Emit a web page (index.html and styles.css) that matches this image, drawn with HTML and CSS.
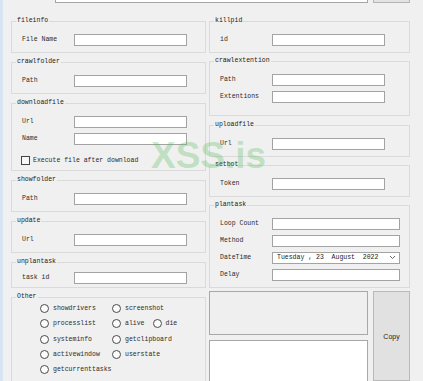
FILE: index.html
```html
<!DOCTYPE html>
<html lang="en">
<head>
    <meta charset="UTF-8">
    <meta name="viewport" content="width=device-width, initial-scale=1.0">
    <title>Panel</title>
    <link rel="stylesheet" href="styles.css">
</head>
<body>
    <div class="window">
        <div class="topbar">
            <input type="text" class="top-input">
            <button class="top-btn"></button>
        </div>

        <div class="columns">
            <div class="col col-left">
                <fieldset class="group">
                    <legend>fileinfo</legend>
                    <div class="row"><label>File Name</label><input type="text" class="field"></div>
                </fieldset>

                <fieldset class="group">
                    <legend>crawlfolder</legend>
                    <div class="row"><label>Path</label><input type="text" class="field"></div>
                </fieldset>

                <fieldset class="group">
                    <legend>downloadfile</legend>
                    <div class="row"><label>Url</label><input type="text" class="field"></div>
                    <div class="row"><label>Name</label><input type="text" class="field"></div>
                    <div class="check-row"><span class="checkbox"></span>Execute file after download</div>
                </fieldset>

                <fieldset class="group">
                    <legend>showfolder</legend>
                    <div class="row"><label>Path</label><input type="text" class="field"></div>
                </fieldset>

                <fieldset class="group">
                    <legend>update</legend>
                    <div class="row"><label>Url</label><input type="text" class="field"></div>
                </fieldset>

                <fieldset class="group group-tight">
                    <legend>unplantask</legend>
                    <div class="row"><label>task id</label><input type="text" class="field"></div>
                </fieldset>

                <fieldset class="group group-other">
                    <legend>Other</legend>
                    <div class="radios">
                        <div class="radio-item"><span class="radio"></span>showdrivers</div>
                        <div class="radio-item"><span class="radio"></span>screenshot</div>
                        <div class="radio-item"><span class="radio"></span>processlist</div>
                        <div class="radio-item">
                            <span class="radio"></span>alive
                            <span class="radio radio-gap"></span>die
                        </div>
                        <div class="radio-item"><span class="radio"></span>systeminfo</div>
                        <div class="radio-item"><span class="radio"></span>getclipboard</div>
                        <div class="radio-item"><span class="radio"></span>activewindow</div>
                        <div class="radio-item"><span class="radio"></span>userstate</div>
                        <div class="radio-item"><span class="radio"></span>getcurrenttasks</div>
                    </div>
                </fieldset>
            </div>

            <div class="col">
                <fieldset class="group">
                    <legend>killpid</legend>
                    <div class="row"><label>id</label><input type="text" class="field"></div>
                </fieldset>

                <fieldset class="group group-loose">
                    <legend>crawlextention</legend>
                    <div class="row"><label>Path</label><input type="text" class="field"></div>
                    <div class="row"><label>Extentions</label><input type="text" class="field"></div>
                </fieldset>

                <fieldset class="group">
                    <legend>uploadfile</legend>
                    <div class="row"><label>Url</label><input type="text" class="field"></div>
                </fieldset>

                <fieldset class="group">
                    <legend>setbot</legend>
                    <div class="row"><label>Token</label><input type="text" class="field"></div>
                </fieldset>

                <fieldset class="group">
                    <legend>plantask</legend>
                    <div class="row"><label>Loop Count</label><input type="text" class="field field-wide"></div>
                    <div class="row"><label>Method</label><input type="text" class="field field-wide"></div>
                    <div class="row">
                        <label>DateTime</label>
                        <div class="field field-wide date-box">
                            <span>Tuesday , 23&nbsp; August&nbsp; 2022</span>
                            <svg width="7" height="5" viewBox="0 0 7 5"><polyline points="1,1 3.5,3.5 6,1" fill="none" stroke="#555" stroke-width="0.9"/></svg>
                        </div>
                    </div>
                    <div class="row"><label>Delay</label><input type="text" class="field field-wide"></div>
                </fieldset>

                <div class="output">
                    <textarea class="out-box out-readonly" readonly></textarea>
                    <button class="copy-btn">Copy</button>
                    <textarea class="out-box"></textarea>
                </div>
            </div>
        </div>

        <div class="watermark">XSS.is</div>
    </div>
</body>
</html>
```

FILE: styles.css
```css
body {
    margin: 0;
    background-color: #f0f0f0;
    font-family: 'Liberation Mono', 'DejaVu Sans Mono', monospace;
    font-size: 6.5px;
    color: #2b2b2b;
    overflow: hidden;
}

.window {
    position: relative;
    min-height: 100vh;
    border-left: 3px solid #d7e4f4;
    padding-left: 8px;
}

.topbar {
    display: flex;
    height: 20px;
    margin-top: -17px;
    margin-bottom: 14px;
    padding-left: 44px;
}

.top-input {
    box-sizing: border-box;
    width: 313px;
    height: 20px;
    margin: 0;
    border: 1px solid #a5a5a5;
    background: #fff;
}

.top-btn {
    box-sizing: border-box;
    width: 37px;
    height: 20px;
    margin: 0 0 0 5px;
    padding: 0;
    border: 1px solid #b5b5b5;
    background: #e3e3e3;
}

.columns {
    display: grid;
    grid-template-columns: 195px 201px;
    column-gap: 3px;
}

.col {
    display: flex;
    flex-direction: column;
    gap: 4px;
}

.col-left {
    gap: 5px;
}

.group {
    margin: 0;
    min-width: 0;
    border: 1px solid #dadada;
    padding: 6px 4px 4px 10px;
}

.group legend {
    margin-left: -6px;
    padding: 0 1px;
    line-height: 8px;
    color: #222;
}

.group-loose {
    padding-bottom: 10px;
    margin-bottom: 1px;
}

.group-tight {
    padding-top: 3px;
    padding-bottom: 1px;
}

.row {
    display: flex;
    align-items: center;
    height: 17px;
}

.row label {
    width: 52px;
    flex-shrink: 0;
}

.field {
    box-sizing: border-box;
    width: 113px;
    height: 12px;
    margin: 0;
    padding: 0;
    border: 1px solid #a3a3a3;
    background: #fff;
}

.field-wide {
    width: 128px;
}

.date-box {
    display: flex;
    align-items: center;
    justify-content: space-between;
    padding: 0 3px 0 4px;
    white-space: pre;
    color: #222;
}

.check-row {
    display: flex;
    align-items: center;
    gap: 3px;
    height: 12px;
    margin-top: 7px;
    margin-left: -1px;
}

.checkbox {
    box-sizing: border-box;
    width: 9px;
    height: 9px;
    border: 1px solid #444;
    background: #f7f7f7;
}

.group-other {
    padding: 0 4px 20px 28px;
}

.group-other legend {
    margin-left: -24px;
}

.radios {
    display: grid;
    grid-template-columns: 72px auto;
    grid-auto-rows: 15.3px;
}

.radio-item {
    display: flex;
    align-items: center;
}

.radio {
    box-sizing: border-box;
    width: 9px;
    height: 9px;
    margin-right: 4px;
    border: 1px solid #4a4a4a;
    border-radius: 50%;
    background: #fbfbfb;
}

.radio-gap {
    margin-left: 8px;
}

.output {
    display: grid;
    grid-template-columns: 159px 37px;
    grid-template-rows: 44px 50px;
    column-gap: 5px;
    row-gap: 5px;
    margin-top: -1px;
}

.out-box {
    box-sizing: border-box;
    width: 100%;
    height: 100%;
    margin: 0;
    border: 1px solid #a8a8a8;
    background: #fff;
    resize: none;
}

.out-readonly {
    background: #efefef;
}

.copy-btn {
    grid-column: 2;
    grid-row: 1 / 3;
    box-sizing: border-box;
    height: 90px;
    margin: 0;
    padding: 0;
    border: 1px solid #b9b9b9;
    background: #e1e1e1;
    font-family: 'Liberation Sans', Arial, sans-serif;
    font-size: 7px;
    color: #222;
}

.watermark {
    position: absolute;
    left: 148px;
    top: 154px;
    font-family: 'Liberation Sans', Arial, sans-serif;
    font-weight: bold;
    font-size: 37px;
    line-height: 1;
    color: rgba(90, 190, 95, 0.32);
    pointer-events: none;
}
```
